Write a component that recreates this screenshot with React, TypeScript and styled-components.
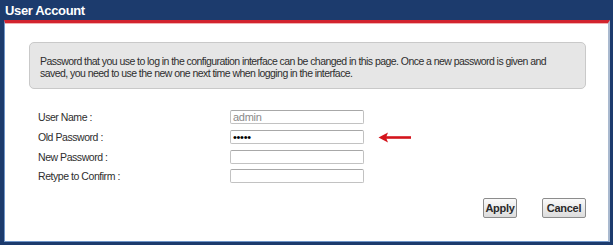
import React from 'react'
import styled, { createGlobalStyle } from 'styled-components'

const GlobalStyle = createGlobalStyle`
  html, body {
    margin: 0;
    padding: 0;
    background: #ffffff;
  }
  body {
    font-family: "Liberation Sans", Arial, sans-serif;
  }
`

const Window = styled.div`
  width: 613px;
  height: 245px;
  box-sizing: border-box;
  padding: 0 3px 3px 4px;
  background-color: #1c3b6d;
  display: flex;
  flex-direction: column;
`

const TitleBar = styled.div`
  height: 20px;
  display: flex;
  align-items: center;
  padding-left: 1px;
  color: #ffffff;
  font-size: 13px;
  font-weight: 700;
  letter-spacing: -0.35px;
`

const Panel = styled.div`
  flex: 1;
  background-color: #ffffff;
  border-top: 3px solid #d2232e;
  border-left: 1px solid #6f95c8;
  border-right: 2px solid #a9b9cf;
  border-bottom: 1px solid #6f95c8;
  box-shadow: inset 0 1px 0 #f3b0b0;
  padding: 19px 0 0 24px;
  display: flex;
  flex-direction: column;
`

const Notice = styled.div`
  width: 557px;
  height: 47px;
  box-sizing: border-box;
  background-color: #e6e6e6;
  border: 1px solid #c9c9c9;
  border-radius: 5px;
  padding: 12px 10px 0 10px;
  color: #2e2e2e;
  font-size: 10.5px;
  letter-spacing: -0.55px;
  line-height: 12px;
  white-space: nowrap;
`

const Form = styled.div`
  margin-top: 21px;
  padding-left: 9px;
  display: flex;
  flex-direction: column;
  gap: 5px;
`

const Row = styled.div`
  display: flex;
  align-items: center;
  height: 14.7px;
`

const Label = styled.span`
  width: 192px;
  color: #2e2e2e;
  font-size: 10.5px;
  letter-spacing: -0.45px;
`

const Field = styled.input<{ $muted?: boolean }>`
  width: 134px;
  height: 14px;
  box-sizing: border-box;
  margin: 0;
  padding: 0 2px;
  border: 1px solid #c2c2c2;
  border-top-color: #a8a8a8;
  border-radius: 2px;
  background: #ffffff;
  color: ${p => (p.$muted ? '#8a8a8a' : '#000000')};
  font-family: "Liberation Sans", Arial, sans-serif;
  font-size: 11px;
  letter-spacing: -0.3px;
  outline: none;
`

const Pointer = styled.svg`
  margin-left: 14px;
`

const Actions = styled.div`
  margin-top: auto;
  margin-bottom: 23px;
  display: flex;
  justify-content: flex-end;
  gap: 25px;
  padding-right: 22px;
`

const Button = styled.button<{ $w: number }>`
  width: ${p => p.$w}px;
  height: 20px;
  padding: 0;
  border: 1px solid #8c8c8c;
  border-radius: 2px;
  background: linear-gradient(#fafafa, #dcdcdc);
  color: #2a2a2a;
  font-family: "Liberation Sans", Arial, sans-serif;
  font-size: 11px;
  font-weight: 700;
  letter-spacing: -0.3px;
`

function Arrow() {
  return (
    <Pointer width="34" height="11" viewBox="0 0 34 11">
      <line x1="6" y1="5.5" x2="33" y2="5.5" stroke="#d4141c" strokeWidth="2.6" />
      <path d="M0.5 5.5 L10 0.5 L8 5.5 L10 10.5 Z" fill="#d4141c" />
    </Pointer>
  )
}

export default function App() {
  return (
    <Window>
      <GlobalStyle />
      <TitleBar>User Account</TitleBar>
      <Panel>
        <Notice>
          Password that you use to log in the configuration interface can be changed in this page. Once a new password is given and
          <br />
          saved, you need to use the new one next time when logging in the interface.
        </Notice>
        <Form>
          <Row>
            <Label>User Name :</Label>
            <Field $muted readOnly value="admin" />
          </Row>
          <Row>
            <Label>Old Password :</Label>
            <Field type="password" readOnly value="admin" />
            <Arrow />
          </Row>
          <Row>
            <Label>New Password :</Label>
            <Field type="password" readOnly value="" />
          </Row>
          <Row>
            <Label>Retype to Confirm :</Label>
            <Field type="password" readOnly value="" />
          </Row>
        </Form>
        <Actions>
          <Button $w={34}>Apply</Button>
          <Button $w={44}>Cancel</Button>
        </Actions>
      </Panel>
    </Window>
  )
}
